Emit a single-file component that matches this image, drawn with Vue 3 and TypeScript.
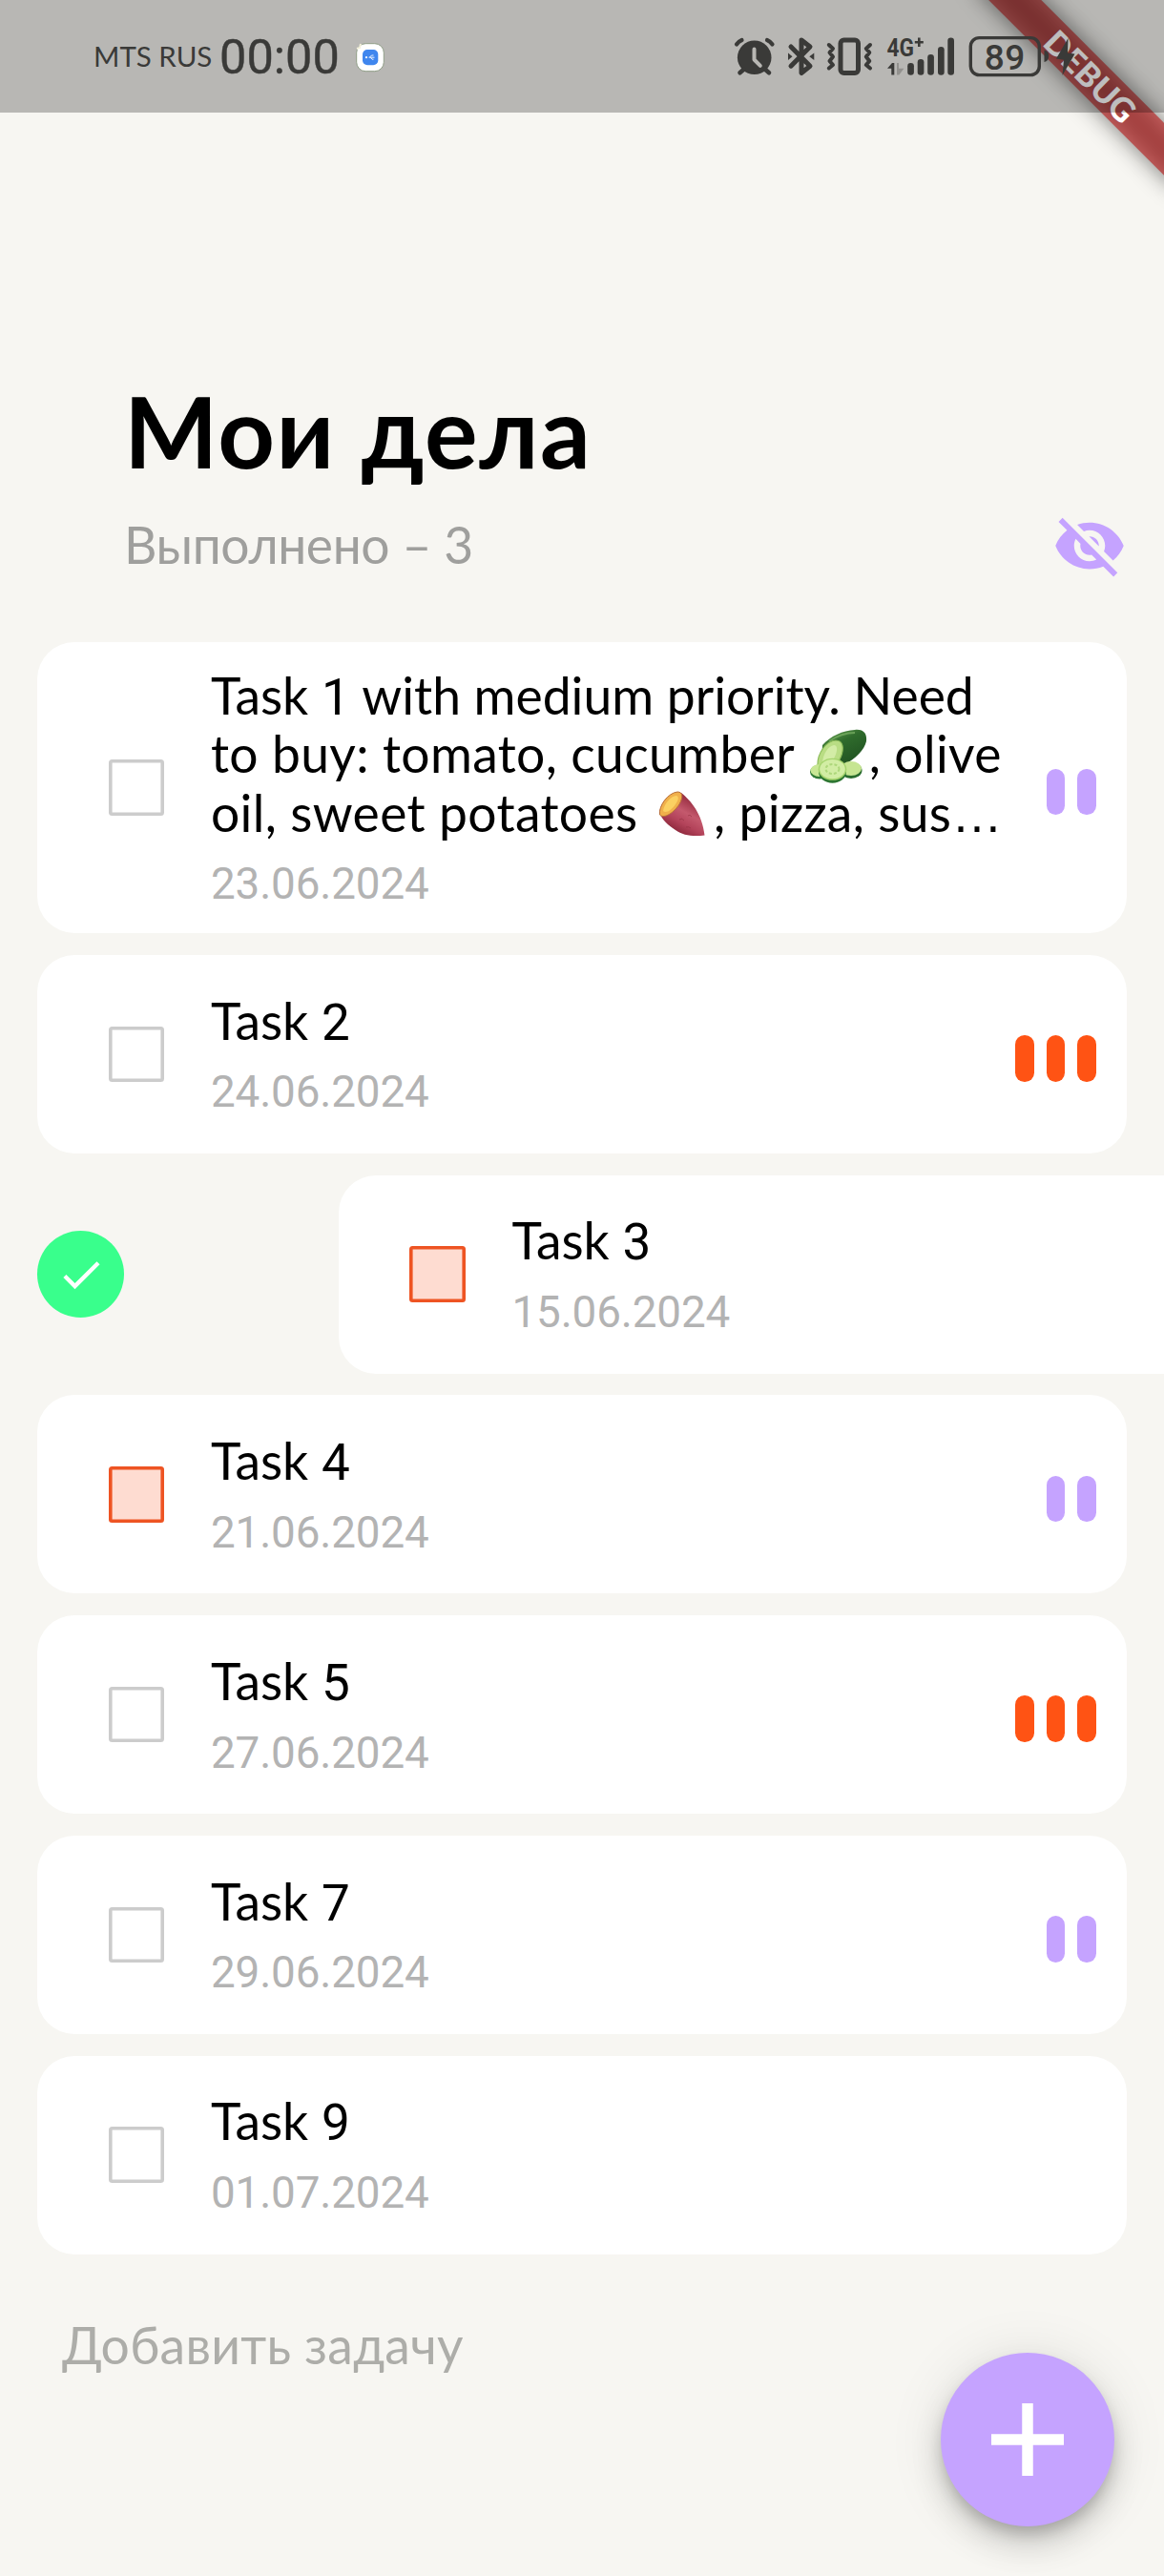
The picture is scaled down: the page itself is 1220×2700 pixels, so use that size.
<script setup lang="ts">
type Part = { kind: 'text' | 'num' | 'dots' | 'cucumber' | 'potato'; text?: string }
interface Task {
  lines: Part[][]
  date: string
  overdue?: boolean
  priority: 0 | 2 | 3
  swiped?: boolean
}

const short = (n: string): Part[][] => [[{ kind: 'text', text: 'Task ' }, { kind: 'num', text: n }]]

const tasks: Task[] = [
  {
    lines: [
      [{ kind: 'text', text: 'Task ' }, { kind: 'num', text: '1' }, { kind: 'text', text: ' with medium priority. Need' }],
      [{ kind: 'text', text: 'to buy: tomato, cucumber ' }, { kind: 'cucumber' }, { kind: 'text', text: ', olive' }],
      [
        { kind: 'text', text: 'oil, sweet potatoes ' },
        { kind: 'potato' },
        { kind: 'text', text: ', pizza, sus' },
        { kind: 'dots', text: '…' },
      ],
    ],
    date: '23.06.2024',
    priority: 2,
  },
  { lines: short('2'), date: '24.06.2024', priority: 3 },
  { lines: short('3'), date: '15.06.2024', overdue: true, priority: 0, swiped: true },
  { lines: short('4'), date: '21.06.2024', overdue: true, priority: 2 },
  { lines: short('5'), date: '27.06.2024', priority: 3 },
  { lines: short('7'), date: '29.06.2024', priority: 2 },
  { lines: short('9'), date: '01.07.2024', priority: 0 },
]
</script>

<template>
  <div class="screen">
    <div class="debug"><div class="ribbon"><span>DEBUG</span></div></div>

    <header class="status">
      <span class="carrier">MTS RUS</span>
      <span class="clock">00:00</span>
      <svg class="app-icon" width="30" height="31" viewBox="0 0 30 31">
        <rect x="0.7" y="0.7" width="28.6" height="29" rx="9.5" fill="#fff" stroke="#8f9d86" stroke-width="1" />
        <path d="M1 6l3-1 1-4" stroke="#f3f0dc" stroke-width="2" fill="none" />
        <rect x="7" y="7" width="16.3" height="16.3" rx="5" fill="#3f86ee" />
        <circle cx="11" cy="15.2" r="1.1" fill="#fff" />
        <path d="M13.5 15.2h6M14.5 15l2-2h2M15.5 15.4l1.5 1.8h1.5" stroke="#fff" stroke-width="0.9" fill="none" />
      </svg>
      <svg class="indicators" width="362" height="48" viewBox="768 36 362 48">
        <g fill="none" stroke="#3a3a38" stroke-linecap="round" stroke-linejoin="round">
          <circle cx="790.7" cy="60.3" r="17.8" fill="#3a3a38" stroke="none" />
          <path d="M790.5 51.5v11l6.3 6.3" stroke="#b8b7b3" stroke-width="4" />
          <path d="M772 46.5q2-3 5.5-4.5M804 42q3.500 1.500 5.500 4.500" stroke-width="4.200" />
          <path d="M775.5 76.300l4-3.500M806 76.300l-4-3.500" stroke-width="4.600" />
          <path d="M829 49l20 20.200-9 7.300v-34.500l9 7-20 20.200" stroke-width="5" />
          <path d="M826 55.500l4.500 3.700-4.500 3.800zM853.300 55.500l-5 3.700 5 3.800z" fill="#3a3a38" stroke="none" />
          <rect x="881" y="42" width="18.500" height="34.500" rx="3.500" stroke-width="5" />
          <path d="M868.800 47l4.200 4-3.500 4 3.500 4.500-3.500 4.500 3.500 4-4.200 3.500M912 47l-4.200 4 3.500 4-3.500 4.500 3.500 4.500-3.500 4 4.200 3.500" stroke-width="4" />
          <rect x="1017.300" y="39.600" width="72" height="39" rx="9" stroke-width="3.400" />
        </g>
        <g fill="#3a3a38">
          <text x="929.500" y="59" class="net" font-size="26" textLength="28.500" lengthAdjust="spacingAndGlyphs">4G</text>
          <path d="M962 39.500h2.600v3.400h3.200v2.600h-3.200v3.400h-2.600v-3.400h-3.200v-2.600h3.200z" />
          <path d="M930 71.700l5-5.700h2.300v12.500h-3v-6.800z" />
          <path d="M940 66h2v5.700h5.400l-5 6.800h-2.400z" fill="#92918e" />
          <rect x="951.200" y="66" width="6.700" height="12.800" rx="3.300" />
          <rect x="961.700" y="62" width="6.700" height="16.800" rx="3.300" />
          <rect x="972.200" y="57" width="6.700" height="21.800" rx="3.300" />
          <rect x="983" y="49" width="6.700" height="29.800" rx="3.300" />
          <rect x="993.300" y="39.500" width="6.700" height="39.300" rx="3.300" />
          <text x="1031.800" y="73" class="level" font-size="37" textLength="42.500">89</text>
          <path d="M1094.500 52.500q4.700 1 4.700 6.200t-4.700 6.200z" />
          <path d="M1119.500 40l-12.500 21.500 8 1.300-1.500 16.200 13-22.500-7.500-1z" />
        </g>
      </svg>
    </header>

    <section class="heading">
      <h1>Мои дела</h1>
      <div class="summary">
        <span class="done">Выполнено – 3</span>
        <svg width="78" height="78" viewBox="0 0 24 24" fill="#c5a3ff">
          <path d="M12 7c2.760 0 5 2.240 5 5 0 .650-.130 1.260-.360 1.830l2.920 2.920c1.510-1.260 2.700-2.890 3.430-4.750-1.730-4.390-6-7.500-11-7.500-1.400 0-2.740.250-3.980.700l2.160 2.160C10.740 7.130 11.350 7 12 7zM2 4.270l2.280 2.280.460.460C3.080 8.300 1.780 10.020 1 12c1.730 4.390 6 7.500 11 7.500 1.550 0 3.030-.300 4.380-.840l.420.420L19.730 22 21 20.730 3.270 3 2 4.270zM7.530 9.800l1.550 1.550c-.050.210-.080.430-.080.650 0 1.660 1.340 3 3 3 .220 0 .440-.030.650-.080l1.550 1.550c-.670.330-1.410.530-2.200.530-2.760 0-5-2.240-5-5 0-.790.200-1.530.530-2.200zm4.310-.780l3.150 3.150.020-.160c0-1.660-1.340-3-3-3l-.170.010z" />
        </svg>
      </div>
    </section>

    <main class="list">
      <div v-for="task in tasks" :key="task.date" class="row">
        <div v-if="task.swiped" class="accept">
          <svg width="52" height="52" viewBox="0 0 24 24" fill="#fff"><path d="M9 16.200 4.800 12l-1.400 1.400L9 19 21 7l-1.400-1.400z" /></svg>
        </div>
        <article class="card" :class="{ swiped: task.swiped, tall: task.lines.length > 1 }">
          <span class="box" :class="{ overdue: task.overdue }"></span>
          <div class="body">
            <div v-for="(line, li) in task.lines" :key="li" class="line" :class="'l' + li">
              <template v-for="(p, pi) in line" :key="pi">
                <svg v-if="p.kind === 'cucumber'" class="cucumber" width="60" height="57" viewBox="0 0 60 57">
                  <defs>
                    <linearGradient id="peel" x1="0.2" y1="0" x2="0.8" y2="1">
                      <stop offset="0" stop-color="#5f9a4c" /><stop offset="0.35" stop-color="#2f6b2c" /><stop offset="1" stop-color="#1e4f20" />
                    </linearGradient>
                  </defs>
                  <path d="M13 17C22 7 34 2 47 1c9-1 13 4 12 12-2 9-11 18-24 25L12 38z" fill="url(#peel)" />
                  <path d="M20 13Q33 4 47 4" stroke="#7db366" stroke-width="2" fill="none" opacity=".7" />
                  <path d="M8 37C8 26 16 13 27 12c8 0 9 9 5 18-3 8-10 14-18 15-4 0-6-3-6-8z" fill="#b9dd84" stroke="#8cbb59" stroke-width="1.200" />
                  <path d="M13 35c1-9 6-17 12-18 4 0 4 6 1 12-2 5-7 9-11 10z" fill="#d3eca6" />
                  <ellipse cx="10" cy="45" rx="10" ry="7.500" fill="#2f7a35" />
                  <ellipse cx="10" cy="43.500" rx="9.500" ry="6.500" fill="#c9e795" />
                  <ellipse cx="43" cy="43.500" rx="11.500" ry="8.500" fill="#2a6c2e" />
                  <ellipse cx="43" cy="41.500" rx="11" ry="7.500" fill="#c6e592" />
                  <ellipse cx="23.500" cy="45" rx="14.500" ry="11.800" fill="#2d7632" />
                  <ellipse cx="23.500" cy="42.300" rx="14.800" ry="11.500" fill="#a4d36c" />
                  <ellipse cx="23.500" cy="42.100" rx="13.300" ry="10.200" fill="#d2eda4" />
                  <ellipse cx="23.500" cy="42" rx="7" ry="5" fill="none" stroke="#aed77b" stroke-width="2" stroke-dasharray="3 2" />
                </svg>
                <svg v-else-if="p.kind === 'potato'" class="potato" width="50" height="48" viewBox="0 0 50 48">
                  <defs>
                    <linearGradient id="skin" x1="0.75" y1="0.1" x2="0.25" y2="0.95">
                      <stop offset="0" stop-color="#8f2538" /><stop offset="0.4" stop-color="#c4596d" /><stop offset="0.65" stop-color="#b3435a" /><stop offset="1" stop-color="#7e1e30" />
                    </linearGradient>
                  </defs>
                  <path d="M1 23C3 10 14 0 24 2c10 8 22 22 24.500 44.500C37 48 26 47 18 41 10 36 4 30 1 23z" fill="url(#skin)" />
                  <path d="M1.500 25C0 16 10 2 20 1c6 0 6 6 2 13C17 22 6 30 1.500 25z" fill="#f0b04b" stroke="#b8703a" stroke-width="1" />
                  <path d="M5 21C6 14 13 5 19 5c3 1 2 5-1 9-4 6-10 10-13 7z" fill="#fbd062" />
                  <path d="M22 30q3-2 5 1M31 26q2-2 4 1M29 38q3-1 5 1" stroke="#91303f" stroke-width="1" fill="none" opacity=".6" />
                </svg>
                <span v-else :class="p.kind">{{ p.text }}</span>
              </template>
            </div>
            <div class="date">{{ task.date }}</div>
          </div>
          <div v-if="task.priority" class="priority" :class="{ high: task.priority === 3 }">
            <i v-for="n in task.priority" :key="n"></i>
          </div>
        </article>
      </div>
    </main>

    <div class="add-hint">Добавить задачу</div>

    <button class="fab" aria-label="+">
      <svg width="76" height="76" viewBox="0 0 76 76"><path d="M38 0v76M0 38h76" stroke="#fff" stroke-width="11.500" /></svg>
    </button>
  </div>
</template>

<style>
body {
  background: #f7f6f2;
}
</style>

<style scoped>
.screen {
  position: relative;
  width: 1220px;
  height: 2700px;
  overflow: hidden;
  background: #f7f6f2;
  font-family: Lato, "Liberation Sans", sans-serif;
  color: #000;
}

.debug {
  position: absolute;
  top: 0;
  right: 0;
  width: 240px;
  height: 240px;
}
.ribbon {
  position: absolute;
  top: 91px;
  left: 90px;
  width: 300px;
  height: 39px;
  transform-origin: 150px -91px;
  transform: rotate(45deg);
  text-align: center;
  font: 900 34.5px/39px Lato, sans-serif;
  text-indent: 4px;
  color: #fff;
}
.ribbon::before,
.ribbon::after {
  content: "";
  position: absolute;
  inset: 0;
}
.ribbon::before {
  z-index: -2;
  background: rgba(0, 0, 0, 0.5);
  filter: blur(12px);
}
.ribbon::after {
  z-index: -1;
  background: rgba(183, 28, 28, 0.63);
}

.status {
  position: relative;
  box-sizing: border-box;
  height: 118px;
  padding-left: 98px;
  background: rgba(0, 0, 0, 0.255);
  display: flex;
  align-items: flex-start;
  color: #3a3a38;
  white-space: nowrap;
}
.carrier {
  width: 132px;
  padding-top: 41px;
  font-size: 29.5px;
  line-height: 36px;
}
.clock {
  width: 143px;
  padding-top: 31px;
  font: 400 50.5px/58px Roboto, sans-serif;
  -webkit-text-stroke: 0.4px #3a3a38;
}
.app-icon {
  margin-top: 45px;
}
.indicators {
  margin: 36px 0 0 365px;
}
.net {
  font-family: Roboto, sans-serif;
  font-weight: 700;
}
.level {
  font-family: Roboto, sans-serif;
  font-weight: 500;
}

.heading {
  padding: 270.7px 39px 0 130px;
}
h1 {
  margin: 0;
  font-size: 104.1px;
  line-height: 124px;
  font-weight: 700;
  letter-spacing: 1.5px;
}
.summary {
  display: flex;
  align-items: center;
  justify-content: space-between;
  height: 78px;
  margin-top: 20.3px;
}
.done {
  padding-bottom: 4px;
  font-size: 53.4px;
  line-height: 64px;
  letter-spacing: -0.4px;
  color: #9f9f9d;
}

.list {
  display: flex;
  flex-direction: column;
  gap: 22.75px;
  padding: 61.75px 39px 0;
}
.row {
  display: flex;
  align-items: center;
}
.accept {
  flex: none;
  width: 91px;
  height: 91px;
  border-radius: 50%;
  background: #39ff8c;
  display: flex;
  align-items: center;
  justify-content: center;
}
.card {
  box-sizing: border-box;
  flex: none;
  width: 1142px;
  height: 208px;
  padding: 0 32.5px 0 74.75px;
  border-radius: 39px;
  background: #fff;
  display: flex;
  align-items: center;
}
.card.tall {
  height: 305.5px;
}
.card.swiped {
  margin-left: 224.500px;
}
.box {
  box-sizing: border-box;
  flex: none;
  width: 58.5px;
  height: 58.5px;
  margin-right: 48.75px;
  box-shadow: inset 0 0 0 3.6px #ccc;
  border-radius: 3.5px;
}
.box.overdue {
  box-shadow: inset 0 0 0 3.6px #ee5423;
  background: #fedcd1;
}
.body {
  flex: 1;
  padding-top: 3px;
}
.line {
  height: 61.5px;
  font-size: 53.4px;
  line-height: 61.5px;
  white-space: pre;
  display: flex;
  align-items: baseline;
}
.l1,
.l2 {
  letter-spacing: 0.35px;
}
.num {
  font-family: Roboto, sans-serif;
  font-size: 53px;
}
.dots {
  font-family: "Liberation Sans", sans-serif;
  letter-spacing: 0;
}
.cucumber {
  margin: 5px 2px 0 3px;
  align-self: flex-start;
}
.potato {
  margin: 8px 7.5px 0 8px;
  align-self: flex-start;
}
.date {
  margin-top: 16.2px;
  font: 400 45.8px/58px Roboto, sans-serif;
  letter-spacing: -0.15px;
  color: #b3b3b3;
}
.priority {
  display: flex;
  gap: 13px;
  margin-top: 9px;
}
.priority i {
  width: 19.5px;
  height: 48.75px;
  border-radius: 9.75px;
  background: #c5a3ff;
}
.priority.high i {
  background: #ff5314;
}

.add-hint {
  padding: 62px 0 0 65px;
  font-size: 53.4px;
  line-height: 64px;
  letter-spacing: 0.25px;
  color: #adada9;
}

.fab {
  position: absolute;
  left: 986px;
  top: 2466px;
  width: 182px;
  height: 182px;
  padding: 0;
  border: 0;
  border-radius: 50%;
  background: #c5a3ff;
  display: flex;
  align-items: center;
  justify-content: center;
  box-shadow: 0 10px 16px -3px rgba(0, 0, 0, 0.2), 0 19.5px 32.5px rgba(0, 0, 0, 0.14), 0 3px 58px rgba(0, 0, 0, 0.1);
}
</style>
